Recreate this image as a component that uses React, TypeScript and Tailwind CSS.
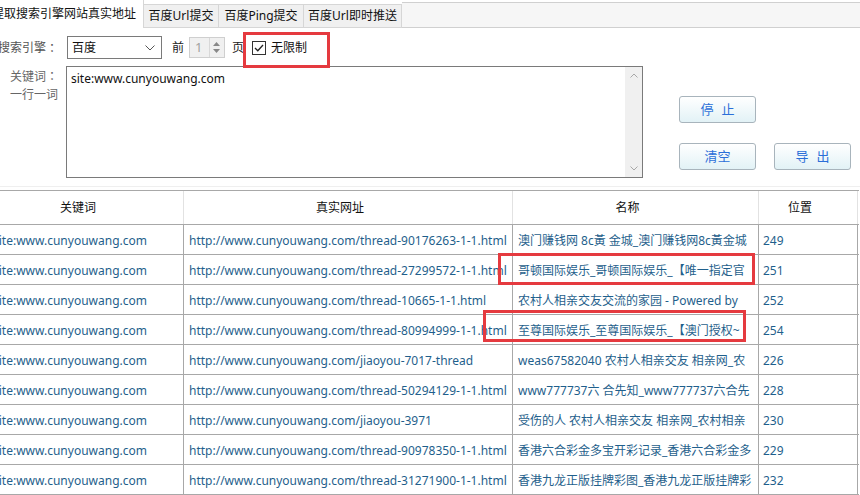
import React from "react";

const rows: [string, string, string][] = [
  ["http://www.cunyouwang.com/thread-90176263-1-1.html", "澳门赚钱网 8c黃 金城_澳门赚钱网8c黃金城", "249"],
  ["http://www.cunyouwang.com/thread-27299572-1-1.html", "哥顿国际娱乐_哥顿国际娱乐_【唯一指定官", "251"],
  ["http://www.cunyouwang.com/thread-10665-1-1.html", "农村人相亲交友交流的家园 - Powered by", "252"],
  ["http://www.cunyouwang.com/thread-80994999-1-1.html", "至尊国际娱乐_至尊国际娱乐_【澳门授权~", "254"],
  ["http://www.cunyouwang.com/jiaoyou-7017-thread", "weas67582040 农村人相亲交友 相亲网_农", "226"],
  ["http://www.cunyouwang.com/thread-50294129-1-1.html", "www777737六 合先知_www777737六合先", "228"],
  ["http://www.cunyouwang.com/jiaoyou-3971", "受伤的人 农村人相亲交友 相亲网_农村相亲", "230"],
  ["http://www.cunyouwang.com/thread-90978350-1-1.html", "香港六合彩金多宝开彩记录_香港六合彩金多", "229"],
  ["http://www.cunyouwang.com/thread-31271900-1-1.html", "香港九龙正版挂牌彩图_香港九龙正版挂牌彩", "232"],
];

function Btn({ a, b }: { a: string; b: string }) {
  return (
    <div className="w-[77px] h-[27px] rounded-[3px] border border-[#a8b4bc] bg-gradient-to-b from-white to-[#e2f2f6] flex items-center justify-center gap-[8px] text-[13px] text-[#2b6fd8]">
      <span>{a}</span>
      <span>{b}</span>
    </div>
  );
}

const Colon = () => (
  <span style={{ fontFamily: '"Noto Sans CJK TC", sans-serif' }}>：</span>
);

export default function App() {
  return (
    <div
      className="relative w-[860px] h-[495px] overflow-hidden bg-white text-[#222] text-[12px]"
      style={{ fontFamily: '"Noto Sans", "Noto Sans CJK SC", sans-serif' }}
    >
      {/* Tabs */}
      <div className="flex h-[28px] ml-[-8px]">
        <div className="w-[152px] bg-white flex items-center text-[12px] text-[#111] border-r border-[#d6d6d6] whitespace-nowrap">
          提取搜索引擎网站真实地址
        </div>
        <div className="w-[75px] mt-[4px] flex items-center justify-center text-[12px] text-[#111] bg-[#f0f0f0] border-y border-r border-[#d6d6d6] whitespace-nowrap">
          百度Url提交
        </div>
        <div className="w-[85px] mt-[4px] flex items-center justify-center text-[12px] text-[#111] bg-[#f0f0f0] border-y border-r border-[#d6d6d6] whitespace-nowrap">
          百度Ping提交
        </div>
        <div className="w-[98px] mt-[4px] flex items-center justify-center text-[12px] text-[#111] bg-[#f0f0f0] border-y border-r border-[#d6d6d6] whitespace-nowrap">
          百度Url即时推送
        </div>
        <div className="flex-1 mt-[2px] bg-[#f6f6f6] border-y border-[#d0d0d0]" />
      </div>

      {/* Controls row */}
      <div className="flex items-center h-[23px] mt-[8px]">
        <div className="w-[58px] flex justify-end text-[12px] text-[#555] whitespace-nowrap">
          搜索引擎<Colon />
        </div>
        <div className="ml-[9px] w-[95px] h-[23px] border border-[#7a7a7a] bg-white flex items-center justify-between pl-[4px] pr-[6px] text-[12px] text-[#111]">
          <span>百度</span>
          <svg width="10" height="6" viewBox="0 0 10 6" fill="none" stroke="#555" strokeWidth="1">
            <path d="M0.5 0.5 L5 5 L9.5 0.5" />
          </svg>
        </div>
        <span className="ml-[10px] text-[12px] text-[#222]">前</span>
        <div className="ml-[5px] w-[36px] h-[21px] border border-[#cfcfcf] bg-[#f0f0f0] flex items-center">
          <span className="ml-[5px] text-[13px] text-[#a0a0a0] flex-1">1</span>
          <div className="w-[14px] h-[19px] mr-[1px] border-l border-[#d8d8d8] flex flex-col items-center justify-center gap-[3px]">
            <svg width="7" height="4" viewBox="0 0 7 4"><path d="M0 4 L3.5 0 L7 4 Z" fill="#888" /></svg>
            <svg width="7" height="4" viewBox="0 0 7 4"><path d="M0 0 L3.5 4 L7 0 Z" fill="#888" /></svg>
          </div>
        </div>
        <span className="ml-[7px] text-[12px] text-[#222]">页</span>
        <div className="ml-[8px] w-[14px] h-[14px] border border-[#333] bg-white flex items-center justify-center">
          <svg width="10" height="8" viewBox="0 0 10 8" fill="none" stroke="#222" strokeWidth="1.3">
            <path d="M1 4 L3.8 6.8 L9 1" />
          </svg>
        </div>
        <span className="ml-[5px] text-[12px] text-[#111]">无限制</span>
      </div>

      {/* Keyword row */}
      <div className="flex mt-[7px] h-[112px]">
        <div className="w-[58px] flex flex-col items-end pt-[1px] text-[12px] leading-[18px] text-[#666]">
          <span>关键词<Colon /></span>
          <span>一行一词</span>
        </div>
        <div className="ml-[8px] w-[577px] h-[112px] border border-[#7a7a7a] bg-white flex">
          <div className="flex-1 pl-[4px] pt-[3px] text-[12px] text-[#111]">site:www.cunyouwang.com</div>
          <div className="w-[17px] bg-[#f0f0f0] flex flex-col items-center justify-between py-[6px]">
            <svg width="8" height="5" viewBox="0 0 8 5" fill="none" stroke="#a8a8a8" strokeWidth="1"><path d="M0.5 4.5 L4 1 L7.5 4.5" /></svg>
            <svg width="8" height="5" viewBox="0 0 8 5" fill="none" stroke="#a8a8a8" strokeWidth="1"><path d="M0.5 0.5 L4 4 L7.5 0.5" /></svg>
          </div>
        </div>
        <div className="ml-[36px] flex flex-col pt-[30px]">
          <Btn a="停" b="止" />
          <div className="flex gap-[18px] mt-[20px]">
            <div className="w-[77px] h-[27px] rounded-[3px] border border-[#a8b4bc] bg-gradient-to-b from-white to-[#e2f2f6] flex items-center justify-center text-[13px] text-[#2b6fd8]">
              清空
            </div>
            <Btn a="导" b="出" />
          </div>
        </div>
      </div>

      <div className="mt-[8px] h-[1px] bg-[#efefef]" />

      {/* Table */}
      <div className="mt-[3px] ml-[-11px] w-[870px] border-t border-[#a8a8a8] text-[12px]">
        <div className="flex h-[34px] border-b border-[#a8a8a8] text-[#111]">
          <div className="w-[195px] border-r border-[#e2e2e2] flex items-center justify-center pr-[16px]">关键词</div>
          <div className="w-[329px] border-r border-[#e2e2e2] flex items-center justify-center pr-[16px]">真实网址</div>
          <div className="w-[246px] border-r border-[#e2e2e2] flex items-center justify-center pr-[16px]">名称</div>
          <div className="w-[99px] border-r border-[#e2e2e2] flex items-center justify-center pr-[16px]">位置</div>
        </div>
        {rows.map(([url, name, pos], i) => (
          <div key={i} className="flex h-[30px] border-b border-[#a8a8a8] text-[#1f5f8c]">
            <div className="w-[195px] border-r border-[#a8a8a8] flex items-center pt-[2px] pl-[4px] overflow-hidden whitespace-nowrap">site:www.cunyouwang.com</div>
            <div className="w-[329px] border-r border-[#a8a8a8] flex items-center pt-[2px] pl-[5px] overflow-hidden whitespace-nowrap">{url}</div>
            <div className="w-[246px] border-r border-[#a8a8a8] flex items-center pt-[2px] pl-[5px] overflow-hidden whitespace-nowrap">{name}</div>
            <div className="w-[99px] border-r border-[#a8a8a8] flex items-center pt-[2px] pl-[4px] overflow-hidden whitespace-nowrap">{pos}</div>
          </div>
        ))}
      </div>

      {/* Red annotation boxes */}
      <div className="absolute left-[243px] top-[32px] w-[87px] h-[36px] border-[3px] border-[#e53a3f]" />
      <div className="absolute left-[498px] top-[253px] w-[257px] h-[32px] border-[3px] border-[#e53a3f]" />
      <div className="absolute left-[483px] top-[310px] w-[263px] h-[32px] border-[3px] border-[#e53a3f]" />
    </div>
  );
}
